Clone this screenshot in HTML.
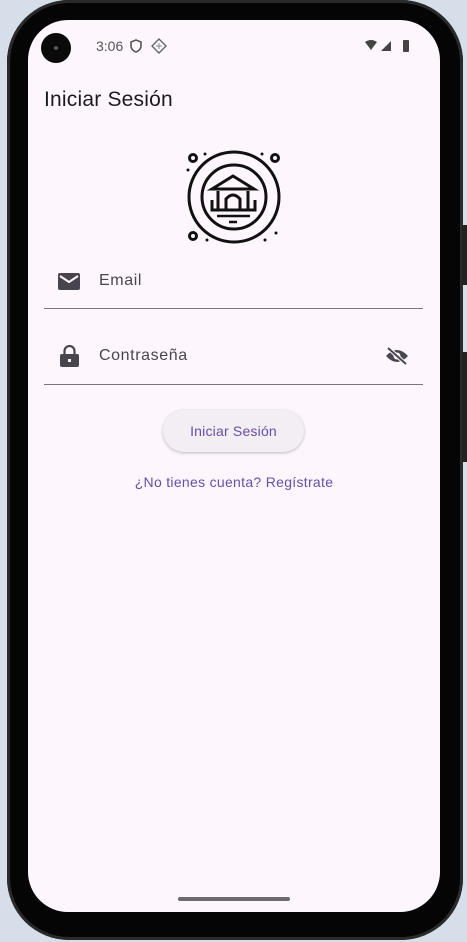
<!DOCTYPE html>
<html><head><meta charset="utf-8"><style>
html,body{margin:0;padding:0;width:467px;height:942px;overflow:hidden;background:#d6dfe9;font-family:"Liberation Sans",sans-serif}
.frame{position:absolute;left:7px;top:0;width:456px;height:940px;border-radius:62px;background:#050505;box-shadow:inset 0 0 0 3px #2a2a2a}
.btn{position:absolute;left:462px;width:5px;background:#222}
.screen{position:absolute;left:28px;top:20px;width:412px;height:892px;border-radius:40px;background:#fdf7fd;overflow:hidden}
.abs{position:absolute}
</style></head><body>
<div class="frame"></div>
<div class="btn" style="top:225px;height:60px"></div>
<div class="btn" style="top:352px;height:110px"></div>
<div class="screen">
  <div class="abs" style="left:13px;top:13px;width:30px;height:30px;border-radius:50%;background:#0a0a0a"></div>
  <div class="abs" style="left:26px;top:26px;width:4px;height:4px;border-radius:50%;background:#555"></div>
  <div class="abs" style="left:68px;top:18px;font-size:14px;color:#555">3:06</div>
  <svg class="abs" style="left:101px;top:19px" width="14" height="14" viewBox="0 0 14 14"><path d="M7 1L2 3v4c0 3 2.5 5 5 6 2.5-1 5-3 5-6V3z" fill="none" stroke="#555" stroke-width="1.6"/></svg>
  <svg class="abs" style="left:123px;top:18px" width="16" height="16" viewBox="0 0 16 16"><path d="M8 1L15 8 8 15 1 8z" fill="none" stroke="#666" stroke-width="1.4"/><path d="M5 8h6M8 5v6" stroke="#888"/></svg>
  <svg class="abs" style="left:336px;top:19px" width="50" height="14" viewBox="0 0 50 14"><path d="M1 3Q7-1 13 3L7 11z" fill="#444"/><path d="M17 12L27 2V12z" fill="#444"/><rect x="39" y="1" width="6" height="12" rx="1" fill="#444"/></svg>
  <div class="abs" style="left:16px;top:68px;font-size:21px;color:#1d1b20;letter-spacing:.2px">Iniciar Sesión</div>
  <svg class="abs" style="left:150px;top:125px" width="110" height="105" viewBox="150 125 110 105">
    <g fill="none" stroke="#111" stroke-width="3" transform="translate(-28,-20)">
      <circle cx="234" cy="197" r="45"/><circle cx="234" cy="197" r="32"/>
      <circle cx="193" cy="158" r="3.5"/><circle cx="275" cy="158" r="3.5"/><circle cx="193" cy="236" r="3.5"/>
      <path d="M212 189L233 176L254 189Z" stroke-width="3"/>
      <path d="M218 191V209M248 191V209M212 200V210H255V200M226 209V199Q233 191 240 199V209" stroke-width="3"/>
      <path d="M217 216H250M229 222H237" stroke-width="2.5"/>
    </g>
    <g fill="#111" transform="translate(-28,-20)"><circle cx="205" cy="154" r="1.5"/><circle cx="262" cy="154" r="1.5"/><circle cx="188" cy="170" r="1.5"/><circle cx="276" cy="233" r="1.5"/><circle cx="207" cy="240" r="1.5"/><circle cx="265" cy="240" r="1.5"/></g>
  </svg>
  <svg class="abs" style="left:30px;top:253px" width="22" height="17" viewBox="0 0 22 17"><rect width="22" height="17" rx="2" fill="#49454f"/><path d="M2 3l9 6 9-6" fill="none" stroke="#fdf7fd" stroke-width="2"/></svg>
  <div class="abs" style="left:71px;top:252px;font-size:16px;color:#49454f;letter-spacing:.6px">Email</div>
  <div class="abs" style="left:16px;top:288px;width:379px;height:1px;background:#79747e"></div>
  <svg class="abs" style="left:32px;top:325px" width="19" height="22" viewBox="0 0 19 22"><path d="M4.5 9V6a5 5 0 0 1 10 0v3" fill="none" stroke="#49454f" stroke-width="2.2"/><rect y="9" width="19" height="13" rx="2" fill="#49454f"/><rect x="8" y="14" width="3" height="3" fill="#fdf7fd"/></svg>
  <div class="abs" style="left:71px;top:327px;font-size:16px;color:#49454f;letter-spacing:.6px">Contraseña</div>
  <svg class="abs" style="left:357px;top:326px" width="24" height="20" viewBox="0 0 24 20"><path d="M1 10Q12-2 23 10 12 22 1 10z" fill="#49454f"/><circle cx="12" cy="10" r="3.5" fill="#fdf7fd"/><path d="M3 2l18 16" stroke="#fdf7fd" stroke-width="4"/><path d="M3 2l18 16" stroke="#49454f" stroke-width="2"/></svg>
  <div class="abs" style="left:16px;top:364px;width:379px;height:1px;background:#79747e"></div>
  <div class="abs" style="left:135px;top:390px;width:141px;height:42px;border-radius:21px;background:#f3edf4;box-shadow:0 1px 3px rgba(0,0,0,.25);text-align:center;line-height:42px;font-size:14px;color:#6750a4;letter-spacing:.2px">Iniciar Sesión</div>
  <div class="abs" style="left:0;width:412px;top:454px;text-align:center;font-size:14px;color:#6750a4;letter-spacing:.3px">¿No tienes cuenta? Regístrate</div>
  <div class="abs" style="left:150px;top:877px;width:112px;height:4px;border-radius:2px;background:#6e6a72"></div>
</div>
</body></html>
